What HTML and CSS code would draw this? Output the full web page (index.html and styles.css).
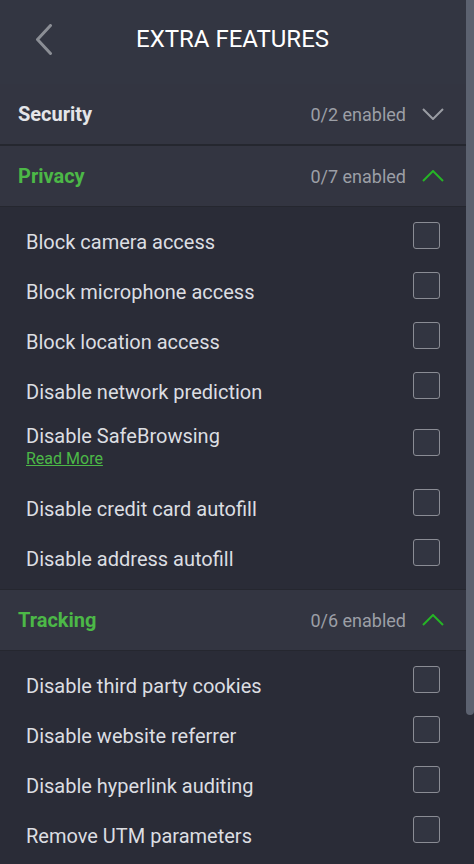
FILE: index.html
```html
<!DOCTYPE html>
<html>
<head>
<meta charset="utf-8">
<link rel="stylesheet" href="styles.css">
</head>
<body>
<div class="app">
  <div class="main">
    <header class="topbar">
      <svg class="back" width="18" height="31" viewBox="0 0 18 31"><path d="M15.5 1.5 L2.5 15.5 L15.5 29.5" fill="none" stroke="#8b8e95" stroke-width="3" stroke-linecap="round" stroke-linejoin="round"/></svg>
      <h1 class="title">EXTRA FEATURES</h1>
    </header>

    <section class="section">
      <div class="sec-head">
        <span class="sec-name">Security</span>
        <span class="sec-count">0/2 enabled</span>
        <svg class="chev" width="22" height="12" viewBox="0 0 22 12"><path d="M1 1 L11 11 L21 1" fill="none" stroke="#9a9ca3" stroke-width="2"/></svg>
      </div>
    </section>

    <section class="section open">
      <div class="sec-head">
        <span class="sec-name">Privacy</span>
        <span class="sec-count">0/7 enabled</span>
        <svg class="chev" width="22" height="12" viewBox="0 0 22 12"><path d="M1 11 L11 1 L21 11" fill="none" stroke="#26b426" stroke-width="2"/></svg>
      </div>
      <ul class="items">
        <li class="item"><span class="label">Block camera access</span><span class="box"></span></li>
        <li class="item"><span class="label">Block microphone access</span><span class="box"></span></li>
        <li class="item"><span class="label">Block location access</span><span class="box"></span></li>
        <li class="item"><span class="label">Disable network prediction</span><span class="box"></span></li>
        <li class="item tall"><span class="label">Disable SafeBrowsing<a class="more" href="#">Read More</a></span><span class="box"></span></li>
        <li class="item"><span class="label">Disable credit card autofill</span><span class="box"></span></li>
        <li class="item"><span class="label">Disable address autofill</span><span class="box"></span></li>
      </ul>
    </section>

    <section class="section open">
      <div class="sec-head">
        <span class="sec-name">Tracking</span>
        <span class="sec-count">0/6 enabled</span>
        <svg class="chev" width="22" height="12" viewBox="0 0 22 12"><path d="M1 11 L11 1 L21 11" fill="none" stroke="#26b426" stroke-width="2"/></svg>
      </div>
      <ul class="items">
        <li class="item"><span class="label">Disable third party cookies</span><span class="box"></span></li>
        <li class="item"><span class="label">Disable website referrer</span><span class="box"></span></li>
        <li class="item"><span class="label">Disable hyperlink auditing</span><span class="box"></span></li>
        <li class="item"><span class="label">Remove UTM parameters</span><span class="box"></span></li>
      </ul>
    </section>
  </div>
  <div class="scrollbar"><div class="thumb"></div></div>
</div>
</body>
</html>
```

FILE: styles.css
```css
* { box-sizing: border-box; }
html, body {
  margin: 0;
  padding: 0;
  height: 864px;
  overflow: hidden;
  background: #2a2c37;
  font-family: Roboto, "Liberation Sans", sans-serif;
}
.app {
  display: flex;
  width: 474px;
  height: 864px;
}
.main {
  width: 466px;
  flex: none;
}
.scrollbar {
  width: 8px;
  flex: none;
  background: #2a2c37;
}
.thumb {
  height: 715px;
  background: #5c6270;
  border-radius: 0 0 4px 4px;
}
.topbar {
  height: 84px;
  background: #333642;
  display: flex;
  align-items: center;
  padding: 0 0 6px 35px;
}
.back { flex: none; }
.title {
  margin: 0 0 0 83px;
  font-size: 24px;
  font-weight: 400;
  color: #ffffff;
}
.section + .section { border-top: 1px solid #25272f; }
.sec-head {
  height: 61px;
  display: flex;
  align-items: center;
  padding: 0 22px 0 18px;
  background: #333541;
  border-bottom: 1px solid #25272f;
}
.sec-name {
  flex: 1;
  font-size: 20px;
  font-weight: 700;
  color: #e4e5e8;
}
.open .sec-name { color: #4cb847; }
.sec-count {
  font-size: 18px;
  color: #9c9fa6;
  margin-right: 16px;
}
.chev { flex: none; }
.items {
  list-style: none;
  margin: 0;
  padding: 10px 0 5px 0;
  background: #2a2c37;
}
.item {
  height: 50px;
  display: flex;
  align-items: flex-start;
  justify-content: space-between;
  padding: 0 26px;
}
.item.tall { height: 67px; padding-top: 7px; }
.label {
  font-size: 20px;
  color: #dcdee2;
  line-height: 50px;
  display: flex;
  flex-direction: column;
}
.tall .label { line-height: 24px; }
.more {
  font-size: 16px;
  color: #4cb847;
  text-decoration: underline;
  line-height: 22px;
}
.box {
  width: 27px;
  height: 27px;
  border: 1.5px solid #8a8c94;
  border-radius: 3px;
  background: #323541;
  margin-top: 5px;
}
.tall .box { margin-top: 5px; }
```
